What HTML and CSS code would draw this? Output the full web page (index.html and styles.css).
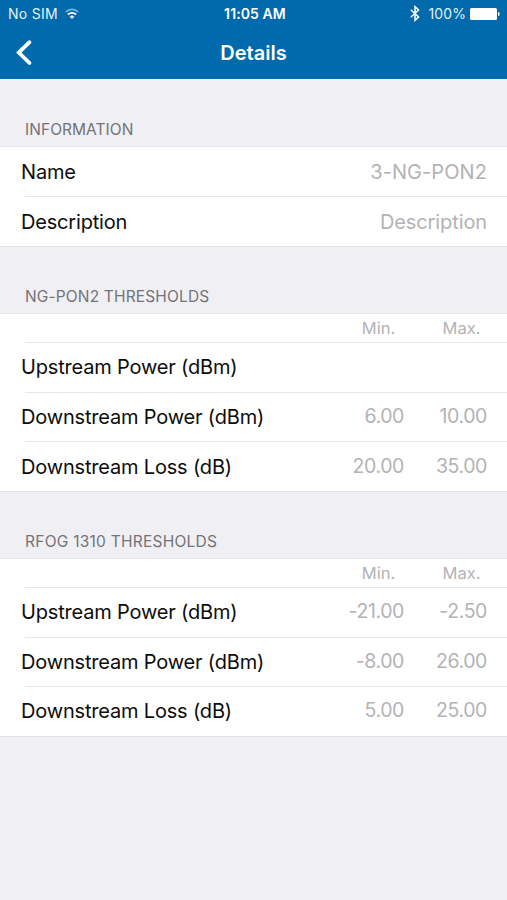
FILE: index.html
```html
<!DOCTYPE html>
<html lang="en"><head><meta charset="utf-8"><title>Details</title><link rel="stylesheet" href="styles.css"></head>
<body>
<header class="top">
<div class="status">
<div class="carrier"><span class="sim">No SIM</span><svg class="wifi" width="14" height="12" viewBox="0 0 14 12"><path d="M.7 4a9 9 0 0 1 12.6 0" fill="none" stroke="#fff" stroke-opacity=".5" stroke-width="1.7"/><path d="M3 6.5a5.7 5.7 0 0 1 8 0" fill="none" stroke="#fff" stroke-width="1.9"/><path d="M4.7 8.6a3.3 3.3 0 0 1 4.6 0L7 11z" fill="#fff"/></svg></div>
<span class="clock">11:05 AM</span>
<div class="power"><svg width="10" height="17" viewBox="0 0 10 17"><path d="M.8 4.7 8.6 11.9 5 15.3V1.7L8.6 5.1.8 12.3" fill="none" stroke="#fff" stroke-width="1.5"/></svg><span class="pct">100%</span><svg class="battery" width="30" height="12" viewBox="0 0 30 12"><rect width="27" height="12" rx="1.5" fill="#fff"/><path d="M28 4q1.7.2 1.7 2T28 8z" fill="#fff"/></svg></div>
</div>
<nav class="nav"><svg class="back" width="18" height="28" viewBox="0 0 18 28"><path d="M14.5 3.2 3.8 13.6 14.5 24" fill="none" stroke="#fff" stroke-width="3.8" stroke-linecap="round"/></svg><h1 class="title">Details</h1></nav>
</header>
<main>
<section><h2 class="heading information"><span>INFORMATION</span></h2>
<div class="group">
<div class="row"><span class="label">Name</span><span class="value code">3-NG-PON2</span></div>
<div class="row last"><span class="label">Description</span><span class="value">Description</span></div>
</div></section>
<section><h2 class="heading"><span>NG-PON2 THRESHOLDS</span></h2>
<div class="group">
<div class="columns"><span>Min.</span><span>Max.</span></div>
<div class="row"><span class="label">Upstream Power (dBm)</span></div>
<div class="row"><span class="label">Downstream Power (dBm)</span><span class="min">6.00</span><span class="max">10.00</span></div>
<div class="row"><span class="label">Downstream Loss (dB)</span><span class="min">20.00</span><span class="max">35.00</span></div>
</div></section>
<section><h2 class="heading rfog"><span>RFOG 1310 THRESHOLDS</span></h2>
<div class="group">
<div class="columns"><span>Min.</span><span>Max.</span></div>
<div class="row"><span class="label">Upstream Power (dBm)</span><span class="min">-21.00</span><span class="max">-2.50</span></div>
<div class="row"><span class="label">Downstream Power (dBm)</span><span class="min">-8.00</span><span class="max">26.00</span></div>
<div class="row"><span class="label">Downstream Loss (dB)</span><span class="min">5.00</span><span class="max">25.00</span></div>
</div></section>
</main></body></html>
```
FILE: styles.css
```css
*{box-sizing:border-box}
body{margin:0;min-height:900px;background:#efeff4;font-family:Inter,"Liberation Sans",sans-serif;color:#0c0c0c}
.top{height:79px;background:#006aad;color:#fff}
.status{height:27px;display:grid;grid-template-columns:1fr auto 1fr;align-items:center;font-size:14px;padding:0 7px 0 8px}
.carrier,.power{display:flex;align-items:center;gap:7px;color:#e3f0f8}
.sim{letter-spacing:.3px}
.power{justify-content:flex-end;gap:4px}
.pct{margin-left:4px;letter-spacing:.1px}
.clock{font-weight:600;letter-spacing:.1px;padding-left:2px}
.nav{height:52px;display:grid;grid-template-columns:40px 1fr 40px;align-items:center;padding-bottom:1px}
.back{margin-left:15px}
.title{margin:0;text-align:center;font-size:20px;font-weight:600}
.heading{height:68px;margin:0;padding:0 0 8px 25px;display:flex;align-items:flex-end;font-size:15.5px;line-height:19px;letter-spacing:.15px;font-weight:400;color:#737378}
.information{letter-spacing:.05px}
.rfog{letter-spacing:.25px}
.group{background:#fff;box-shadow:0 -1px #e7e7eb,0 1px #e3e3e7}
.row{height:49.6px;display:flex;align-items:center;padding:0 20px 0 21px;font-size:20px;background:linear-gradient(#e7e7e9,#e7e7e9) 25px 0/100% 1px no-repeat}
.row:first-child{height:49.2px;background:none}
.last{height:50px}
.label{flex:1;letter-spacing:-.18px;padding-top:1px}
.value,.min,.max{color:#b3b3b5}
.value{letter-spacing:-.1px;padding-top:1px}
.code{letter-spacing:.08px}
.min,.max{width:83px;text-align:right;font-size:19.5px;letter-spacing:-.4px;padding-bottom:1px}
.columns{height:28px;display:flex;justify-content:flex-end;padding-right:20px;align-items:center;font-size:16.5px;color:#b3b3b5}
.columns span{width:83px;text-align:center;padding-left:32px}
```
